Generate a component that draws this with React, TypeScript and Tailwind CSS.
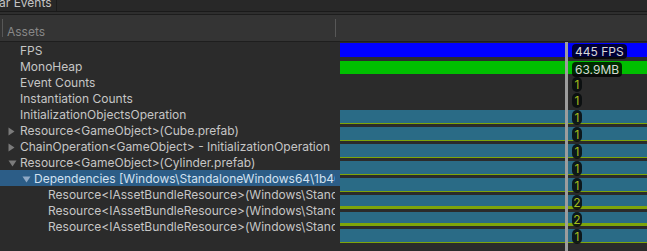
import React from "react";

type Row = {
  text: string;
  depth: number;
  arrow?: "right" | "down";
  bar?: "blue" | "green" | "teal";
  count?: number;
  label: string;
  selected?: boolean;
};

const rows: Row[] = [
  { text: "FPS", depth: 0, bar: "blue", label: "445 FPS" },
  { text: "MonoHeap", depth: 0, bar: "green", label: "63.9MB" },
  { text: "Event Counts", depth: 0, label: "1" },
  { text: "Instantiation Counts", depth: 0, label: "1" },
  { text: "InitializationObjectsOperation", depth: 0, bar: "teal", count: 1, label: "1" },
  { text: "Resource<GameObject>(Cube.prefab)", depth: 0, arrow: "right", bar: "teal", count: 1, label: "1" },
  { text: "ChainOperation<GameObject> - InitializationOperation", depth: 0, arrow: "right", bar: "teal", count: 1, label: "1" },
  { text: "Resource<GameObject>(Cylinder.prefab)", depth: 0, arrow: "down", bar: "teal", count: 1, label: "1" },
  { text: "Dependencies [Windows\\StandaloneWindows64\\1b46c0f1e3b5a7d9]", depth: 1, arrow: "down", bar: "teal", count: 1, label: "1", selected: true },
  { text: "Resource<IAssetBundleResource>(Windows\\StandaloneWindows64\\defaultlocalgroup_assets_all.bundle)", depth: 2, bar: "teal", count: 2, label: "2" },
  { text: "Resource<IAssetBundleResource>(Windows\\StandaloneWindows64\\defaultlocalgroup_scenes_all.bundle)", depth: 2, bar: "teal", count: 2, label: "2" },
  { text: "Resource<IAssetBundleResource>(Windows\\StandaloneWindows64\\shaders_unitybuiltinshaders.bundle)", depth: 2, bar: "teal", count: 1, label: "1" },
];

function Arrow({ dir, selected }: { dir: "right" | "down"; selected?: boolean }) {
  const fill = selected ? "#8fa9c6" : "#7b7b7b";
  if (dir === "right") {
    return (
      <svg width="7" height="9" viewBox="0 0 7 9" className="shrink-0">
        <path d="M0.5 0.5 L6.5 4.5 L0.5 8.5 Z" fill={fill} />
      </svg>
    );
  }
  return (
    <svg width="9" height="7" viewBox="0 0 9 7" className="shrink-0">
      <path d="M0.5 0.5 L8.5 0.5 L4.5 6.5 Z" fill={fill} />
    </svg>
  );
}

function BarCell({ row }: { row: Row }) {
  let bar: React.ReactNode = null;
  if (row.bar === "blue") {
    bar = <div className="mt-[1px] h-[14px] bg-[#0000ff]" />;
  } else if (row.bar === "green") {
    bar = <div className="mt-[2px] h-[13px] bg-[#00bf00]" />;
  } else if (row.bar === "teal") {
    bar =
      row.count === 2 ? (
        <div className="mt-[1px] flex flex-col">
          <div className="h-[11px] bg-[#2a6b86]" />
          <div className="h-[3px] bg-[#7ea50a]" />
        </div>
      ) : (
        <div className="mt-[1px] flex flex-col">
          <div className="h-[13px] bg-[#2a6b86]" />
          <div className="h-[1px] bg-[#7ea50a]" />
        </div>
      );
  }
  const isCount = row.label.length === 1;
  return (
    <div className="relative h-[16px]">
      {bar}
      <div
        className={
          isCount
            ? "absolute left-[232px] top-[0px] flex h-[15px] w-[10px] items-center justify-center rounded-[5px] bg-[rgba(8,12,14,0.88)] pt-[1px] text-[12px] leading-[14px] text-[#a3bd1c]"
            : "absolute left-[232px] top-[1px] flex h-[15px] items-center rounded-[4px] bg-[rgba(0,0,0,0.78)] px-[3px] pt-[1px] text-[12px] leading-[14px] text-[#d8d8d8]"
        }
      >
        {row.label}
      </div>
    </div>
  );
}

export default function App() {
  return (
    <div
      className="relative h-[251px] w-[647px] overflow-hidden bg-[#2b2b2b]"
      style={{ fontFamily: "Inter, 'Noto Sans', sans-serif" }}
    >
      {/* tab strip */}
      <div className="flex h-[11px] bg-[#282828]">
        <div className="relative h-[11px] w-[57px] overflow-hidden border-r border-[#1c1c1c]">
          <div className="absolute left-[-1px] top-[-3px] whitespace-nowrap text-[12px] leading-[12px] text-[#c4c4c4]">
            ar Events
          </div>
        </div>
      </div>
      <div className="h-[1px] bg-[#1a1a1a]" />
      <div className="h-[2px] bg-[#2e2e2e]" />
      <div className="h-[1px] bg-[#1d1d1d]" />
      {/* header */}
      <div className="flex h-[27px] items-start border-b border-[#1e1e1e] bg-[#343434]">
        <div className="ml-[2px] mt-[4px] h-[18px] w-[1px] bg-[#575757]" />
        <div className="ml-[4px] mt-[9px] w-[328px] text-[12px] leading-[16px] text-[#878787]">Assets</div>
        <div className="mt-[4px] h-[18px] w-[1px] bg-[#575757]" />
      </div>
      {/* rows */}
      <div className="relative flex">
        <div className="w-[340px] shrink-0">
          {rows.map((r, i) => (
            <div
              key={i}
              className={"flex h-[16px] items-center " + (r.selected ? "bg-[#2c5d87]" : "")}
            >
              <div className="relative flex h-[16px] w-[335px] items-start overflow-hidden whitespace-nowrap">
                {r.arrow && (
                  <div
                    className="absolute top-[1px] flex h-[16px] items-center"
                    style={{ left: 8 + r.depth * 14 }}
                  >
                    <Arrow dir={r.arrow} selected={r.selected} />
                  </div>
                )}
                <span
                  className={
                    "pt-[1px] text-[12px] leading-[16px] " +
                    (r.selected ? "text-[#d2e1f0]" : "text-[#c6c6c6]")
                  }
                  style={{ paddingLeft: 20 + r.depth * 14 }}
                >
                  {r.text}
                </span>
              </div>
            </div>
          ))}
        </div>
        <div className="relative flex-1">
          {rows.map((r, i) => (
            <BarCell key={i} row={r} />
          ))}
        </div>
      </div>
      {/* time cursor */}
      <div className="absolute bottom-0 left-[565px] top-[42px] w-[3px] bg-[#9d9d9d]" />
    </div>
  );
}
